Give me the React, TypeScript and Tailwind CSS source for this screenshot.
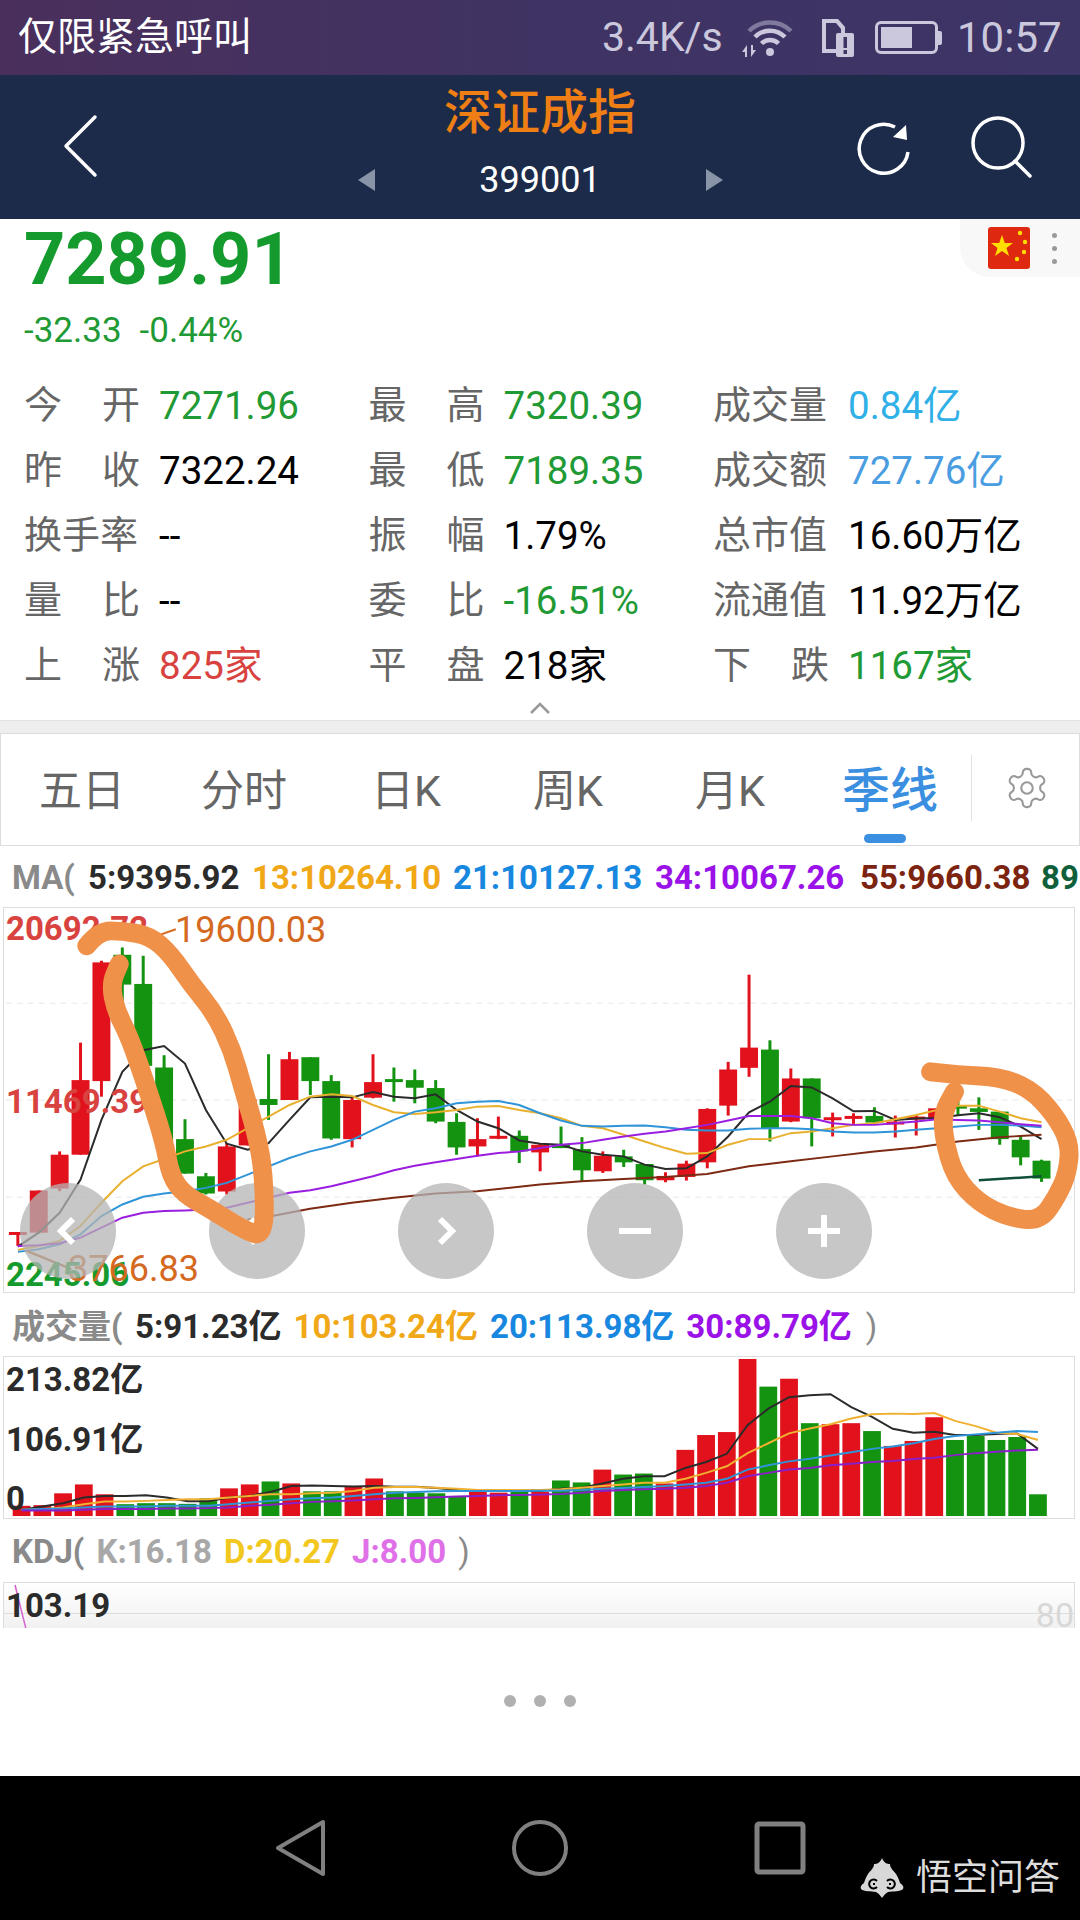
import React from 'react';

// x of the i-th candle, page px
const X = (i: number) => 15.15 + 21 * i;
// chart y, read from the reference
const KY = (y: number) => 880 + y / 3;
const VY = (y: number) => 1300 + y / 3;

type Candle = [number, number, number, number, 'r' | 'g'];

// wick top, wick bottom, body top, body bottom
const candles: Candle[] = [
  [1058, 1100, 1058, 1066, 'r'], [933, 1062, 933, 1060, 'r'], [815, 935, 825, 927, 'r'], [487, 825, 600, 825, 'r'],
  [240, 650, 245, 603, 'r'], [200, 400, 222, 312, 'g'], [225, 557, 310, 557, 'g'], [525, 790, 562, 790, 'g'],
  [718, 882, 778, 882, 'g'], [880, 945, 890, 942, 'g'], [790, 945, 800, 936, 'r'], [658, 797, 658, 797, 'r'],
  [522, 720, 657, 675, 'g'], [515, 660, 537, 660, 'r'], [531, 645, 531, 603, 'g'], [585, 780, 603, 776, 'g'],
  [650, 803, 660, 778, 'r'], [522, 655, 606, 653, 'r'], [562, 665, 597, 604, 'g'], [568, 670, 600, 623, 'g'],
  [600, 730, 624, 725, 'g'], [700, 825, 726, 803, 'g'], [715, 830, 778, 800, 'r'], [710, 778, 768, 776, 'r'],
  [752, 850, 768, 815, 'g'], [790, 875, 795, 818, 'r'], [740, 805, 793, 805, 'g'], [772, 905, 808, 872, 'g'],
  [815, 880, 828, 875, 'r'], [810, 862, 830, 848, 'g'], [853, 915, 853, 902, 'g'], [878, 908, 889, 902, 'r'],
  [843, 903, 852, 892, 'r'], [685, 866, 687, 848, 'r'], [545, 707, 568, 677, 'r'], [282, 590, 502, 563, 'r'],
  [480, 785, 508, 745, 'g'], [565, 727, 595, 725, 'r'], [595, 800, 595, 715, 'g'], [698, 770, 712, 718, 'r'],
  [700, 732, 708, 716, 'r'], [682, 735, 708, 728, 'g'], [707, 773, 725, 731, 'r'], [705, 767, 710, 716, 'r'],
  [685, 715, 685, 715, 'r'], [655, 705, 677, 684, 'g'], [652, 750, 685, 696, 'g'], [695, 795, 695, 778, 'g'],
  [770, 857, 780, 833, 'g'], [840, 907, 843, 897, 'g'],
];

const kLines: [string, number, number[]][] = [
  ['#2b2b2b', 0, [1102, 1060, 1000, 900, 720, 575, 510, 497, 550, 690, 792, 810, 790, 720, 652, 650, 652, 636, 650, 655, 643, 690, 725, 745, 782, 792, 795, 815, 825, 830, 855, 868, 866, 830, 770, 697, 665, 618, 622, 655, 694, 693, 720, 716, 714, 706, 700, 712, 740, 778]],
  ['#e8b02e', 0, [1112, 1100, 1085, 1040, 970, 905, 860, 838, 815, 800, 780, 745, 710, 675, 650, 643, 648, 675, 697, 702, 697, 690, 680, 678, 690, 700, 715, 738, 745, 765, 785, 805, 822, 820, 795, 778, 778, 760, 755, 745, 735, 730, 718, 705, 690, 677, 677, 695, 715, 727]],
  ['#2f94d8', 0, [1118, 1110, 1095, 1065, 1010, 975, 952, 942, 935, 925, 910, 885, 860, 835, 815, 800, 780, 750, 720, 695, 685, 670, 665, 663, 675, 700, 722, 738, 740, 738, 737, 742, 750, 752, 752, 747, 745, 745, 748, 755, 758, 758, 755, 750, 745, 740, 735, 735, 737, 742]],
  ['#9a1ee0', 0, [1100, 1098, 1092, 1075, 1045, 1015, 1000, 995, 993, 990, 985, 970, 955, 940, 932, 920, 905, 890, 872, 858, 848, 838, 828, 820, 815, 805, 795, 790, 780, 770, 762, 755, 745, 735, 722, 708, 708, 708, 715, 730, 735, 735, 730, 725, 718, 720, 722, 727, 733, 738]],
];

const brown: [number, number][] = [
  [714, 1020], [775, 1012], [897, 988], [1019, 970], [1141, 955], [1263, 942], [1385, 935], [1568, 915],
  [1690, 905], [1812, 898], [1934, 892], [2056, 883], [2178, 860], [2300, 845], [2422, 830], [2544, 815],
  [2666, 803], [2788, 785], [2910, 772], [3032, 765],
];

const volTops: number[] = [
  620, 618, 582, 555, 585, 615, 612, 612, 614, 597, 567, 555, 546, 552, 576, 576, 560, 537, 576, 580, 582, 592, 578, 580, 578,
  578, 543, 549, 510, 525, 522, 552, 450, 405, 396, 174, 258, 234, 369, 372, 369, 393, 438, 423, 351, 420, 408, 420, 411, 585,
];
const volColors = 'rrrrrgggggrrgrggrrggggrrgrggrggrrrrrgrgrrgrrrggggg';

const vLines: [string, number[]][] = [
  ['#2b2b2b', [632, 622, 612, 595, 590, 590, 588, 595, 606, 606, 595, 590, 578, 560, 558, 560, 561, 560, 562, 562, 566, 572, 575, 575, 575, 575, 568, 565, 552, 538, 530, 530, 505, 487, 462, 375, 325, 290, 284, 281, 320, 350, 386, 398, 395, 405, 405, 402, 400, 447]],
  ['#f0b030', [632, 630, 625, 615, 607, 607, 605, 602, 600, 600, 595, 590, 585, 585, 582, 580, 575, 565, 563, 563, 565, 568, 572, 572, 572, 572, 570, 565, 560, 555, 550, 550, 538, 520, 500, 460, 430, 400, 385, 372, 355, 342, 340, 341, 338, 362, 378, 398, 402, 420]],
  ['#2f94d8', [632, 630, 628, 625, 622, 622, 622, 620, 620, 620, 615, 610, 605, 600, 597, 595, 590, 585, 580, 578, 576, 575, 575, 575, 575, 574, 574, 572, 568, 566, 563, 560, 555, 550, 538, 510, 497, 485, 477, 467, 457, 447, 440, 430, 417, 408, 403, 398, 393, 396]],
  ['#8a1ec8', [634, 634, 634, 632, 630, 630, 630, 628, 628, 627, 625, 620, 617, 612, 608, 606, 604, 600, 597, 596, 594, 592, 590, 588, 587, 586, 584, 580, 575, 572, 570, 568, 565, 560, 550, 530, 520, 510, 505, 497, 492, 487, 484, 478, 474, 466, 460, 456, 452, 450]],
];

const RED = '#e1121c';
const GREEN = '#13930f';

const toPoints = (vals: number[], fy: (y: number) => number) =>
  vals.map((v, i) => `${X(i)},${fy(v)}`).join(' ');

// hand drawn marks: run a quadratic through the midpoints so they stay round
const smear = (pts: [number, number][], ox: number) => {
  const p = pts.map(([x, y]) => [ox + x / 2.904, KY(y)]);
  let d = `M${p[0][0]} ${p[0][1]}`;
  for (let i = 1; i < p.length - 1; i++) {
    const mx = (p[i][0] + p[i + 1][0]) / 2;
    const my = (p[i][1] + p[i + 1][1]) / 2;
    d += ` Q${p[i][0]} ${p[i][1]} ${mx} ${my}`;
  }
  const last = p[p.length - 1];
  return `${d} L${last[0]} ${last[1]}`;
};

const leftMark: [number, number][] = [
  [245, 195], [280, 150], [350, 150], [430, 165], [490, 220], [550, 310], [620, 400], [670, 510], [700, 620], [740, 760],
  [762, 880], [765, 1075], [700, 1050], [600, 985], [530, 945], [490, 890], [470, 780], [420, 620], [370, 470], [330, 390],
  [315, 310], [340, 250],
];
const rightMark: [number, number][] = [
  [1140, 575], [1230, 585], [1340, 590], [1430, 625], [1500, 700], [1548, 790], [1540, 880], [1510, 950], [1460, 1025],
  [1370, 1015], [1280, 970], [1210, 890], [1180, 780], [1175, 700], [1210, 635],
];

const KChart = () => (
  <svg viewBox="3 907 1072 386" className="absolute inset-0 h-full w-full">
    {[1002.7, 1100, 1197.7].map((y) => (
      <line key={y} x1="3" x2="1075" y1={y} y2={y} stroke="#e8e8e8" strokeWidth="1" strokeDasharray="6 5" />
    ))}
    {candles.map(([wt, wb, bt, bb, c], i) => {
      const color = c === 'r' ? RED : GREEN;
      return (
        <g key={i}>
          <rect x={X(i) - 1.5} y={KY(wt)} width="3" height={(wb - wt) / 3} fill={color} />
          <rect x={X(i) - 9} y={KY(bt)} width="18" height={Math.max((bb - bt) / 3, 3)} fill={color} />
        </g>
      );
    })}
    {kLines.map(([color, , vals]) => (
      <polyline key={color} points={toPoints(vals, KY)} fill="none" stroke={color} strokeWidth="2" />
    ))}
    <polyline points={brown.map(([x, y]) => `${x / 2.904},${KY(y)}`).join(' ')} fill="none" stroke="#7c2a14" strokeWidth="2" />
    <line x1={540 + 1281 / 2.904} y1={KY(902)} x2={540 + 1464 / 2.904} y2={KY(890)} stroke="#0f4f3a" strokeWidth="2.5" />
    <line x1={70 / 2.904} y1={KY(1115)} x2={200 / 2.904} y2={KY(1170)} stroke="#b9662c" strokeWidth="2.5" />
    <line x1={450 / 2.904} y1={KY(165)} x2={505 / 2.904} y2={KY(145)} stroke="#d4691f" strokeWidth="2" />
  </svg>
);

const RoundBtn = ({ children }: { children?: React.ReactNode }) => (
  <div className="flex h-[96px] w-[96px] items-center justify-center rounded-full bg-[#b4b4b4]/75">
    <svg viewBox="0 0 40 40" className="h-[40px] w-[40px]" fill="none" stroke="#fff" strokeWidth="6">
      {children}
    </svg>
  </div>
);

const VolChart = () => (
  <svg viewBox="3 1356 1072 163" className="absolute inset-0 h-full w-full">
    {volTops.map((top, i) => (
      <rect key={i} x={X(i) - 9} y={VY(top)} width="18" height={1517 - VY(top)} fill={volColors[i] === 'r' ? RED : GREEN} />
    ))}
    {vLines.map(([color, vals]) => (
      <polyline key={color} points={toPoints(vals, VY)} fill="none" stroke={color} strokeWidth="2" />
    ))}
  </svg>
);

const stats = [
  [
    ['今', '开', '7271.96', 'text-[#1f9a35]'],
    ['昨', '收', '7322.24', 'text-black'],
    ['换手率', '', '--', 'text-black'],
    ['量', '比', '--', 'text-black'],
    ['上', '涨', '825家', 'text-[#d8423f]'],
  ],
  [
    ['最', '高', '7320.39', 'text-[#1f9a35]'],
    ['最', '低', '7189.35', 'text-[#1f9a35]'],
    ['振', '幅', '1.79%', 'text-black'],
    ['委', '比', '-16.51%', 'text-[#1f9a35]'],
    ['平', '盘', '218家', 'text-black'],
  ],
  [
    ['成交量', '', '0.84亿', 'text-[#2fb0e6]'],
    ['成交额', '', '727.76亿', 'text-[#4a9de0]'],
    ['总市值', '', '16.60万亿', 'text-black'],
    ['流通值', '', '11.92万亿', 'text-black'],
    ['下', '跌', '1167家', 'text-[#1f9a35]'],
  ],
];

const tabs = ['五日', '分时', '日K', '周K', '月K'];

export default function App() {
  return (
    <div className="flex h-[1920px] w-[1080px] flex-col overflow-hidden bg-white font-[Roboto,'Noto_Sans_CJK_SC',sans-serif]">
      {/* status bar */}
      <div className="flex h-[75px] shrink-0 items-center bg-gradient-to-r from-[#4a2f5c] via-[#3f3363] to-[#3d3566] pl-[18px] text-[#cbc8de]">
        <span className="w-[584px] text-[39px] text-white">仅限紧急呼叫</span>
        <span className="w-[140px] text-[41px]">3.4K/s</span>
        <svg viewBox="0 0 54 38" className="h-[38px] w-[54px]" fill="none" strokeWidth="4.5">
          <path d="M7 12 A30 30 0 0 1 49 12" stroke="#7f7a9e" />
          <path d="M13 18 A21 21 0 0 1 43 18" stroke="#cbc8de" />
          <path d="M19.5 24.5 A12 12 0 0 1 36.5 24.5" stroke="#cbc8de" />
          <circle cx="28" cy="33" r="4" fill="#cbc8de" stroke="none" />
          <path d="M0 33 L5 26 V38 H3 V33 Z M9 26 H11 V31 H14 L9 38 Z" fill="#cbc8de" stroke="none" />
        </svg>
        <svg viewBox="0 0 34 38" className="ml-[24px] h-[38px] w-[34px]">
          <path d="M2 0 H18 L25 8 V34 H2 Z M6 4 V30 H21 V10 L16 4 Z" fill="#cbc8de" fillRule="evenodd" />
          <rect x="16" y="14" width="18" height="24" rx="2" fill="#cbc8de" />
          <rect x="23.5" y="18" width="3.5" height="11" fill="#3f3363" />
          <rect x="23.5" y="31" width="3.5" height="4" fill="#3f3363" />
        </svg>
        <div className="ml-[21px] flex items-center">
          <div className="flex h-[33px] w-[63px] items-center rounded-[6px] border-[3px] border-[#cbc8de] p-[3px]">
            <div className="h-full w-[31px] bg-[#cbc8de]" />
          </div>
          <div className="h-[14px] w-[4px] rounded-r-[2px] bg-[#cbc8de]" />
        </div>
        <span className="ml-[15px] text-[42px]">10:57</span>
      </div>

      {/* title bar */}
      <div className="flex h-[144px] shrink-0 bg-[#1c2b4a]">
        <div className="flex w-[300px] items-center pb-[2px] pl-[62px]">
          <svg viewBox="0 0 36 64" className="h-[64px] w-[36px]" fill="none" stroke="#fff" strokeWidth="3.5" strokeLinecap="round" strokeLinejoin="round">
            <path d="M33 3 L4 32 L33 61" />
          </svg>
        </div>
        <div className="flex flex-1 flex-col items-center">
          <div className="h-[76px] text-[48px] font-medium leading-[76px] text-[#ef7e14]">深证成指</div>
          <div className="flex h-[58px] w-[365px] items-center justify-between">
            <div className="h-0 w-0 border-y-[11px] border-r-[17px] border-y-transparent border-r-[#8a94a8]" />
            <span className="text-[36px] leading-none text-white">399001</span>
            <div className="h-0 w-0 border-y-[11px] border-l-[17px] border-y-transparent border-l-[#8a94a8]" />
          </div>
        </div>
        <div className="flex w-[300px] items-center justify-end gap-[58px] pr-[48px]">
          <svg viewBox="0 0 56 56" className="mt-[4px] h-[56px] w-[56px]" fill="none" stroke="#fff" strokeWidth="3.5">
            <path d="M52 31 A24.5 24.5 0 1 1 39 6" />
            <path d="M50 4 L51 19 L37 16 Z" fill="#fff" stroke="none" />
          </svg>
          <svg viewBox="0 0 62 62" className="h-[62px] w-[62px]" fill="none" stroke="#fff" strokeWidth="3.5" strokeLinecap="round">
            <circle cx="28" cy="27" r="25" />
            <path d="M45 45 L60 60" />
          </svg>
        </div>
      </div>

      {/* quote */}
      <div className="relative h-[501px] shrink-0 pl-[24px]">
        <div className="text-[72px] font-bold leading-[82px] text-[#149a2d]">7289.91</div>
        <div className="mt-[5px] flex h-[50px] items-center gap-[18px] text-[35px] text-[#1f9a35]">
          <span>-32.33</span>
          <span>-0.44%</span>
        </div>
        <div className="mt-[17px] flex">
          {stats.map((col, c) => (
            <div key={c} className="w-[344.5px]">
              {col.map(([a, b, val, color]) => (
                <div key={a + b} className="flex h-[65px] items-center whitespace-nowrap text-[38.5px]">
                  <div className="flex w-[116px] justify-between text-[38px] text-[#666]">
                    <span>{a}</span>
                    {b && <span>{b}</span>}
                  </div>
                  <span className={`ml-[19px] ${color}`}>{val}</span>
                </div>
              ))}
            </div>
          ))}
        </div>
        <svg viewBox="0 0 1080 12" className="-ml-[24px] mt-[4px] h-[12px] w-[1080px]" fill="none" stroke="#999" strokeWidth="2.5">
          <path d="M531 11 L540 2 L549 11" />
        </svg>
        {/* flag tab */}
        <div className="absolute top-0 right-0 flex h-[58px] w-[120px] items-center rounded-bl-[30px] bg-[#f8f8f8] pl-[28px]">
          <svg viewBox="0 0 42 42" className="h-[42px] w-[42px]">
            <rect width="42" height="42" rx="3" fill="#de2910" />
            <path d="M14 8 L16.8 16 L25 16 L18.5 21 L21 29 L14 24 L7 29 L9.5 21 L3 16 L11.2 16 Z" fill="#ffde00" />
            <circle cx="32" cy="6" r="2.2" fill="#ffde00" />
            <circle cx="37" cy="15" r="2.2" fill="#ffde00" />
            <circle cx="36" cy="25" r="2.2" fill="#ffde00" />
            <circle cx="29" cy="32" r="2.2" fill="#ffde00" />
          </svg>
          <div className="ml-[22px] flex flex-col gap-[8px]">
            <div className="h-[5px] w-[5px] rounded-full bg-[#999]" />
            <div className="h-[5px] w-[5px] rounded-full bg-[#999]" />
            <div className="h-[5px] w-[5px] rounded-full bg-[#999]" />
          </div>
        </div>
      </div>

      <div className="h-[13px] shrink-0 border-t border-[#e2e2e2] bg-[#eee]" />

      {/* period tabs */}
      <div className="relative flex h-[113px] shrink-0 items-center border border-[#ddd] pt-[3px] text-[#666]">
        {tabs.map((t) => (
          <div key={t} className="w-[162px] text-center text-[43px]">{t}</div>
        ))}
        <div className="w-[158px] text-center text-[48px] font-medium text-[#3a8fe0]">季线</div>
        <div className="ml-[2px] -mt-[6px] h-[66px] w-px bg-[#e2e2e2]" />
        <svg viewBox="0 0 24 24" className="ml-[32px] -mt-[6px] h-[46px] w-[46px]" fill="none" stroke="#999" strokeWidth="1.1" strokeLinejoin="round">
          <path d="M12.22 2h-.44a2 2 0 0 0-2 2v.18a2 2 0 0 1-1 1.73l-.43.25a2 2 0 0 1-2 0l-.15-.08a2 2 0 0 0-2.73.73l-.22.38a2 2 0 0 0 .73 2.73l.15.1a2 2 0 0 1 1 1.72v.51a2 2 0 0 1-1 1.74l-.15.09a2 2 0 0 0-.73 2.73l.22.38a2 2 0 0 0 2.73.73l.15-.08a2 2 0 0 1 2 0l.43.25a2 2 0 0 1 1 1.73V20a2 2 0 0 0 2 2h.44a2 2 0 0 0 2-2v-.18a2 2 0 0 1 1-1.73l.43-.25a2 2 0 0 1 2 0l.15.08a2 2 0 0 0 2.73-.73l.22-.39a2 2 0 0 0-.73-2.73l-.15-.08a2 2 0 0 1-1-1.74v-.5a2 2 0 0 1 1-1.74l.15-.09a2 2 0 0 0 .73-2.73l-.22-.38a2 2 0 0 0-2.73-.73l-.15.08a2 2 0 0 1-2 0l-.43-.25a2 2 0 0 1-1-1.73V4a2 2 0 0 0-2-2z" />
          <circle cx="12" cy="12" r="3" />
        </svg>
        <div className="absolute top-[100px] left-[863px] h-[9px] w-[42px] rounded-full bg-[#3a8fe0]" />
      </div>

      {/* MA legend */}
      <div className="flex h-[61px] shrink-0 items-center overflow-hidden whitespace-nowrap pt-[3px] pl-[12px] text-[33px] font-bold">
        <span className="w-[76px] text-[#8a8a8a]">MA(</span>
        <span className="w-[164px] text-[#2b2b2b]">5:9395.92</span>
        <span className="w-[201px] text-[#f0a818]">13:10264.10</span>
        <span className="w-[202px] text-[#1787e0]">21:10127.13</span>
        <span className="w-[205px] text-[#9a12e8]">34:10067.26</span>
        <span className="w-[181px] text-[#7c2410]">55:9660.38</span>
        <span className="text-[#0f5f3a]">89</span>
      </div>

      {/* candles */}
      <div className="relative mx-[3px] mr-[5px] h-[386px] shrink-0 border border-[#ddd]">
        <KChart />
        <div className="absolute top-[1px] left-[2px] text-[33px] font-bold leading-[40px] text-[#d8423f]">20692.72</div>
        <div className="absolute top-[2px] left-[171px] text-[36px] leading-[40px] text-[#d4691f]">19600.03</div>
        <div className="absolute top-[174px] left-[2px] text-[33px] font-bold leading-[40px] text-[#d8423f]">11469.39</div>
        <div className="absolute top-[347px] left-[2px] text-[33px] font-bold leading-[40px] text-[#149a2d]">2245.06</div>
        <div className="absolute top-[341px] left-[64px] text-[36px] leading-[40px] text-[#d4691f]">3766.83</div>
        <div className="absolute top-[275px] left-[16px] flex gap-[93px]">
          <RoundBtn><path d="M25 8 L13 20 L25 32" /></RoundBtn>
          <RoundBtn><path d="M14 8 L26 20 L14 32" /></RoundBtn>
          <RoundBtn><path d="M14 8 L26 20 L14 32" /></RoundBtn>
          <RoundBtn><path d="M4 20 H36" /></RoundBtn>
          <RoundBtn><path d="M4 20 H36 M20 4 V36" /></RoundBtn>
        </div>
        <svg viewBox="3 907 1072 386" className="absolute inset-0 h-full w-full overflow-visible" fill="none" stroke="#f0914a" strokeWidth="19" strokeLinecap="round" strokeLinejoin="round">
          <path d={smear(leftMark, 0)} />
          <path d={smear(rightMark, 540)} />
        </svg>
      </div>

      {/* volume */}
      <div className="flex h-[63px] shrink-0 items-center gap-[12px] whitespace-nowrap pt-[5px] pl-[12px] text-[33px] font-bold">
        <span className="w-[111px] text-[#8a8a8a]">成交量(</span>
        <span className="text-[#2b2b2b]">5:91.23亿</span>
        <span className="text-[#f0a818]">10:103.24亿</span>
        <span className="text-[#1787e0]">20:113.98亿</span>
        <span className="text-[#9a12e8]">30:89.79亿</span>
        <span className="ml-[2px] font-normal text-[#8a8a8a]">)</span>
      </div>
      <div className="relative mx-[3px] mr-[5px] h-[163px] shrink-0 border border-[#ddd]">
        <VolChart />
        <div className="absolute top-[3px] left-[2px] text-[33px] font-bold leading-[40px] text-[#2b2b2b]">213.82亿</div>
        <div className="absolute top-[63px] left-[2px] text-[33px] font-bold leading-[40px] text-[#2b2b2b]">106.91亿</div>
        <div className="absolute top-[122px] left-[2px] text-[33px] font-bold leading-[40px] text-[#2b2b2b]">0</div>
      </div>

      {/* KDJ */}
      <div className="flex h-[63px] shrink-0 items-center gap-[12px] whitespace-nowrap pt-[3px] pl-[12px] text-[33px] font-bold">
        <span className="text-[#8a8a8a]">KDJ(</span>
        <span className="text-[#a8a8a8]">K:16.18</span>
        <span className="text-[#f2c81e]">D:20.27</span>
        <span className="text-[#e070e8]">J:8.00</span>
        <span className="font-normal text-[#8a8a8a]">)</span>
      </div>
      <div className="relative mx-[3px] mr-[5px] h-[46px] shrink-0 overflow-hidden border-x border-t border-[#ddd] bg-gradient-to-b from-white to-[#f1f1f1]">
        <div className="absolute top-[30px] right-0 left-0 h-px bg-[#ddd]" />
        <svg viewBox="0 0 20 46" className="absolute top-0 left-[8px] h-[46px] w-[20px]" fill="none" stroke="#d860d0" strokeWidth="1.5">
          <line x1="3" y1="2" x2="14" y2="46" />
        </svg>
        <div className="absolute top-[3px] left-[2px] text-[33px] font-bold leading-[40px] text-[#2b2b2b]">103.19</div>
        <div className="absolute top-[12px] right-0 text-[34px] leading-[40px] text-[#d8d8d8]">80</div>
      </div>

      {/* pager dots */}
      <div className="flex flex-1 items-center justify-center gap-[18px] pb-[2px]">
        <div className="h-[12px] w-[12px] rounded-full bg-[#b0b0b0]" />
        <div className="h-[12px] w-[12px] rounded-full bg-[#b0b0b0]" />
        <div className="h-[12px] w-[12px] rounded-full bg-[#b0b0b0]" />
      </div>

      {/* nav bar */}
      <div className="relative flex h-[144px] shrink-0 items-center justify-center gap-[180px] bg-black">
        <svg viewBox="0 0 60 60" className="h-[60px] w-[60px]" fill="none" stroke="#808080" strokeWidth="4" strokeLinejoin="round">
          <path d="M53 4 V56 L8 30 Z" />
        </svg>
        <svg viewBox="0 0 60 60" className="h-[60px] w-[60px]" fill="none" stroke="#808080" strokeWidth="4">
          <circle cx="30" cy="30" r="26" />
        </svg>
        <svg viewBox="0 0 60 60" className="h-[60px] w-[60px]" fill="none" stroke="#808080" strokeWidth="5" strokeLinejoin="round">
          <rect x="7" y="6" width="46" height="48" rx="2" />
        </svg>
        {/* watermark */}
        <div className="absolute top-[82px] left-[860px] flex items-center gap-[12px]">
          <svg viewBox="0 0 44 40" className="h-[40px] w-[44px]">
            <path d="M22 0 C24 5 27 6 30 6 C30 10 33 12 36 16 C38 19 39 22 40 25 C43 27 44 29 43 31 C40 34 33 33 28 34 C26 35 24 37 22 40 C20 37 18 35 16 34 C11 33 4 34 1 31 C0 29 1 27 4 25 C5 22 6 19 8 16 C11 12 14 10 14 6 C17 6 20 5 22 0 Z" fill="#d8d8d8" />
            <path d="M17 23 A4.5 4.5 0 1 0 17 29 M13 26 H15 M27 23 A4.5 4.5 0 1 1 27 29 M29 26 H31" fill="none" stroke="#000" strokeWidth="2" />
          </svg>
          <span className="text-[36px] leading-none text-[#ddd]">悟空问答</span>
        </div>
      </div>
    </div>
  );
}
